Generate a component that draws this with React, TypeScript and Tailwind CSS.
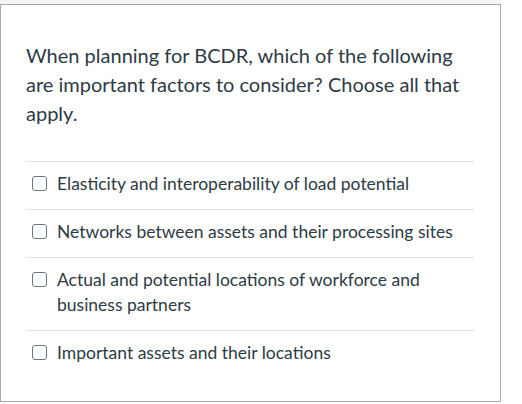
import React from 'react';

const answers = [
  'Elasticity and interoperability of load potential',
  'Networks between assets and their processing sites',
  'Actual and potential locations of workforce and business partners',
  'Important assets and their locations',
];

export default function App() {
  return (
    <div className="w-[522px] h-[404px] bg-white" style={{ fontFamily: 'Lato, "Open Sans", sans-serif' }}>
      <div className="w-[501px] h-[4px] bg-[#f5f5f5]" />
      <div className="w-[501px] h-[398px] border border-[#a9a9a9] text-[#2d3b45] px-[25px]">
        <p className="pt-[36px] text-[20px] leading-[29px] pr-[10px]">
          When planning for BCDR, which of the following are important factors to consider? Choose all that apply.
        </p>
        <ul className="mt-[33px] w-[448px]">
          {answers.map((a) => (
            <li key={a} className="border-t border-[#dcdfe1] flex items-start gap-[10px] pt-[9px] pb-[13px] pl-[6px] pr-[10px]">
              <span className="mt-[5px] w-[15px] h-[15px] shrink-0 rounded-[3px] border border-[#6b7780] bg-white" />
              <span className="text-[17.5px] leading-[25px]">{a}</span>
            </li>
          ))}
        </ul>
      </div>
    </div>
  );
}
